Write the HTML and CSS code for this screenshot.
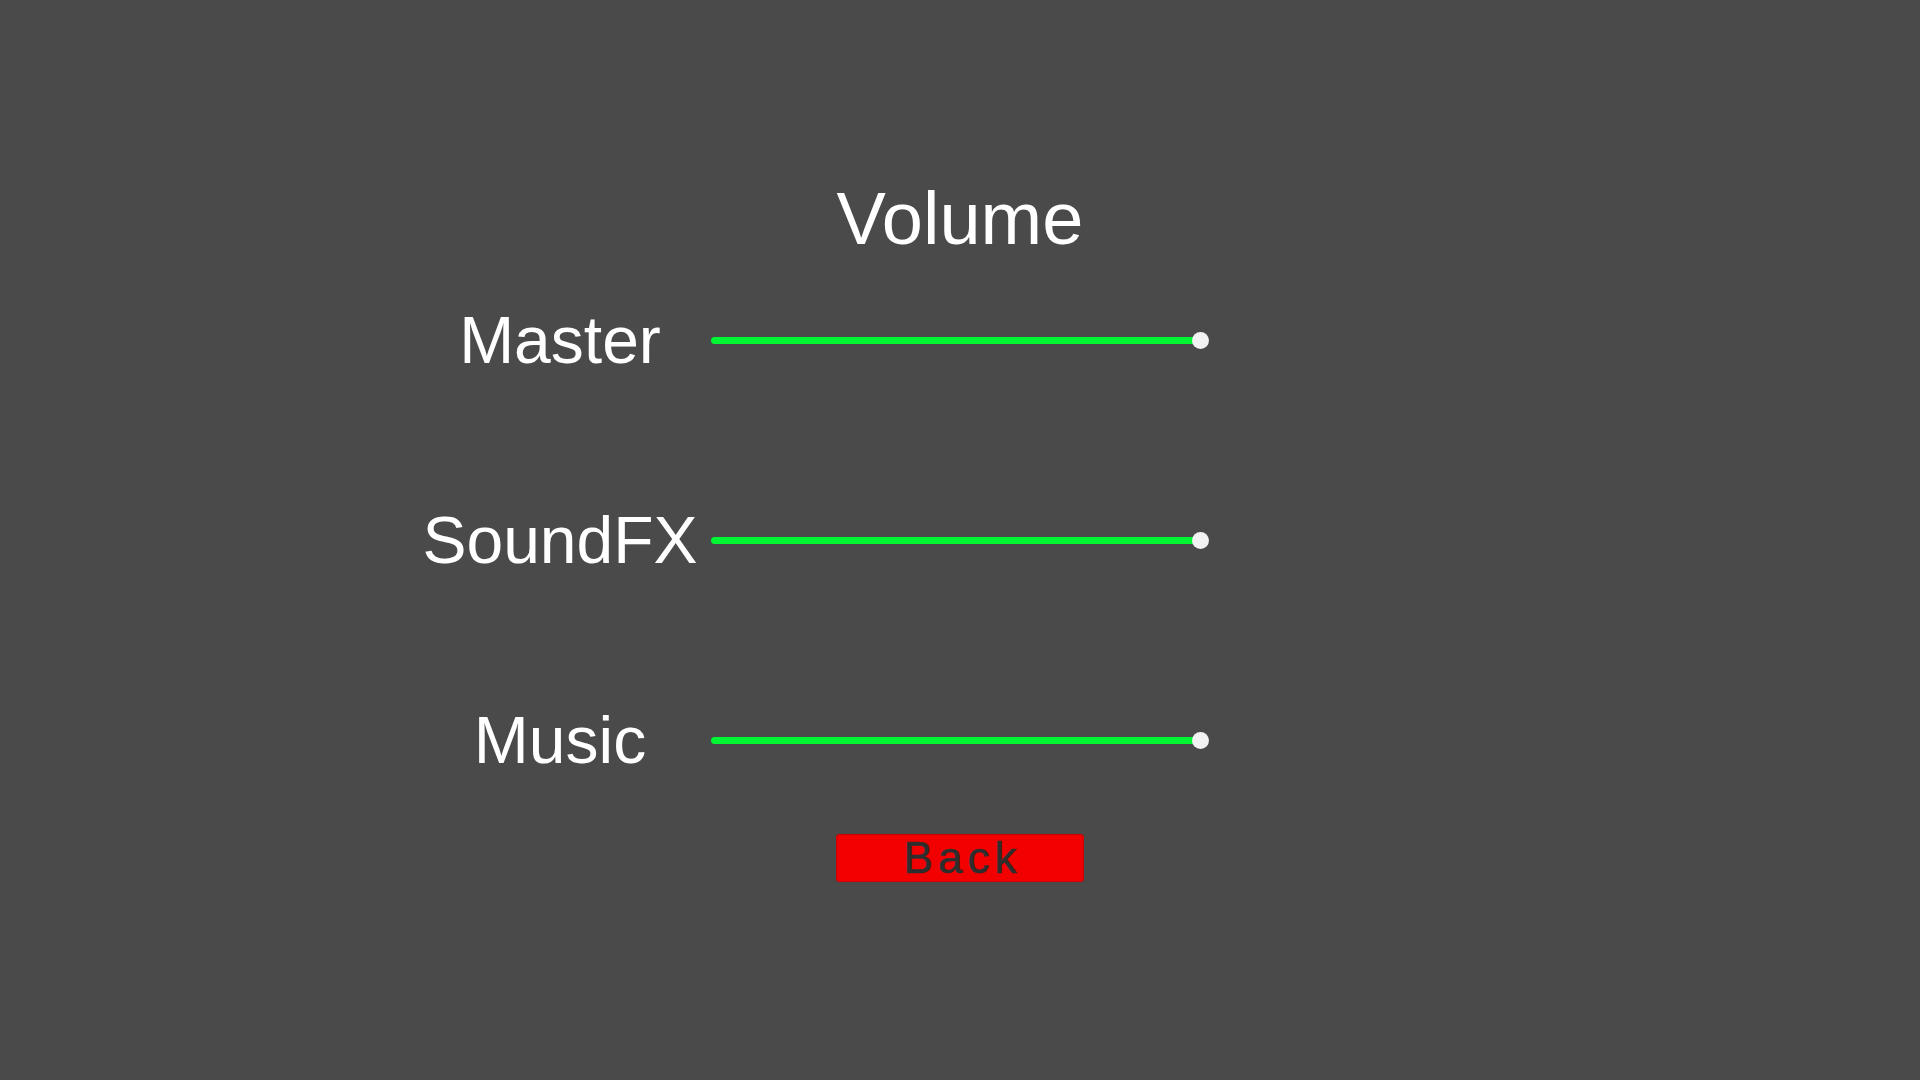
FILE: index.html
```html
<!DOCTYPE html>
<html>
<head>
<meta charset="utf-8">
<link rel="stylesheet" href="styles.css">
</head>
<body>
<div class="screen">
  <h1 class="title">Volume</h1>
  <div class="rows">
    <div class="row">
      <div class="label">Master</div>
      <div class="slider"><div class="track"></div><div class="knob"></div></div>
    </div>
    <div class="row">
      <div class="label">SoundFX</div>
      <div class="slider"><div class="track"></div><div class="knob"></div></div>
    </div>
    <div class="row">
      <div class="label">Music</div>
      <div class="slider"><div class="track"></div><div class="knob"></div></div>
    </div>
  </div>
  <div class="actions">
    <button class="back">Back</button>
  </div>
</div>
</body>
</html>
```
FILE: styles.css
```css
html, body {
  margin: 0;
  padding: 0;
}
body {
  background: #4a4a4a;
  font-family: "Liberation Sans", Arial, sans-serif;
}
.screen {
  width: 1920px;
  height: 1080px;
  background: #4a4a4a;
  padding-top: 182px;
  box-sizing: border-box;
}
.title {
  margin: 0;
  font-size: 74px;
  line-height: 74px;
  font-weight: normal;
  color: #ffffff;
  text-align: center;
}
.rows {
  margin-top: 44px;
  margin-left: 409px;
  width: 820px;
  display: flex;
  flex-direction: column;
  gap: 120px;
}
.row {
  display: flex;
  align-items: center;
  height: 80px;
}
.label {
  width: 302px;
  text-align: center;
  font-size: 66px;
  line-height: 80px;
  color: #ffffff;
  white-space: nowrap;
}
.slider {
  display: flex;
  align-items: center;
  height: 17px;
}
.track {
  width: 489px;
  height: 7px;
  border-radius: 3.5px;
  background: #00f532;
}
.knob {
  width: 17px;
  height: 17px;
  border-radius: 50%;
  background: #f2f2f2;
  margin-left: -8px;
}
.actions {
  display: flex;
  margin-top: 54px;
  padding-left: 836px;
}
.back {
  width: 248px;
  height: 48px;
  padding: 0;
  margin: 0;
  border: 1px solid #c80000;
  border-radius: 3px;
  background: #f20000;
  color: #2e2e2e;
  font-family: "Liberation Sans", Arial, sans-serif;
  font-size: 44px;
  line-height: 46px;
  letter-spacing: 5px;
  text-indent: 5px;
  -webkit-text-stroke: 0.6px #2e2e2e;
}
```
